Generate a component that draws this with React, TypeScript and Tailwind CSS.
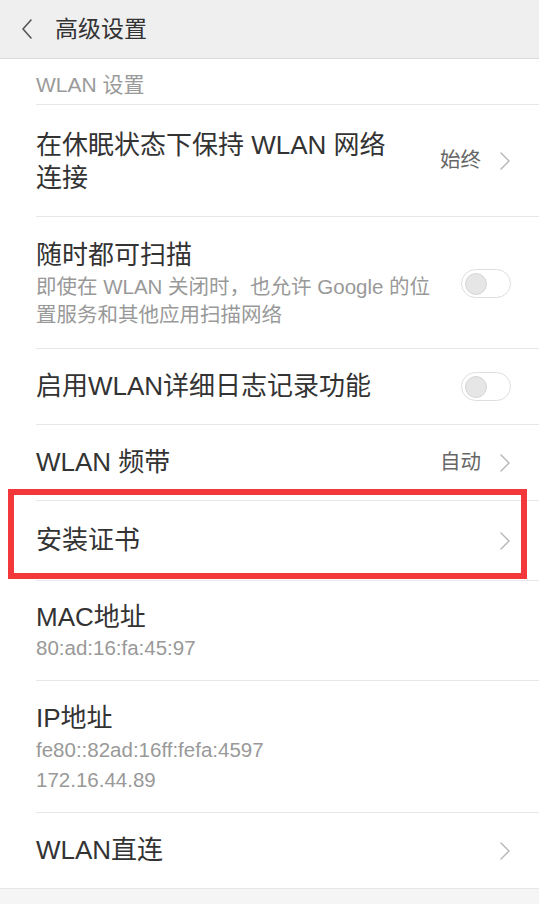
const font = { fontFamily: '"Liberation Sans", "Noto Sans CJK SC", sans-serif' };

const Chevron = () => (
    <svg width="12" height="20" viewBox="0 0 12 20" className="shrink-0">
        <path d="M2 2 L10 10 L2 18" fill="none" stroke="#b5b5b5" strokeWidth="1.4" strokeLinecap="round" strokeLinejoin="round" />
    </svg>
);

const Toggle = () => (
    <div className="w-[50px] h-[29px] rounded-full border border-[#dedede] bg-white flex items-center px-[3px] shrink-0">
        <div className="w-[22px] h-[22px] rounded-full bg-[#e6e6e6] border border-[#d6d6d6]" />
    </div>
);

const Row = ({ h, children }: { h: string; children: React.ReactNode }) => (
    <div className={`ml-[36px] border-t border-[#e8e8e8] pr-[28px] flex items-center ${h}`}>
        {children}
    </div>
);

export default function App() {
    return (
        <div style={font} className="w-[539px] h-[904px] bg-white flex flex-col overflow-hidden">
            <div className="h-[59px] bg-[#efefef] border-b border-[#dadada] flex items-center pl-[20px] shrink-0">
                <svg width="14" height="22" viewBox="0 0 14 22">
                    <path d="M11 2 L3 11 L11 20" fill="none" stroke="#555" strokeWidth="1.6" strokeLinecap="round" strokeLinejoin="round" />
                </svg>
                <span className="ml-[21px] text-[23px] text-[#333]">高级设置</span>
            </div>

            <div className="h-[45px] pl-[36px] pt-[6px] flex items-center text-[21px] text-[#9a9a9a] shrink-0">WLAN 设置</div>

            <Row h="h-[112px]">
                <div className="flex-1 text-[26px] leading-[33px] text-[#333] pt-[2px]">
                    在休眠状态下保持 WLAN 网络<br />连接
                </div>
                <span className="text-[20.5px] text-[#666] mr-[18px]">始终</span>
                <Chevron />
            </Row>

            <Row h="h-[132px]">
                <div className="flex-1 flex flex-col pt-[2px]">
                    <span className="text-[26px] leading-[33px] text-[#333]">随时都可扫描</span>
                    <span className="text-[20.5px] leading-[28px] text-[#999] mt-[1px]">
                        即使在 WLAN 关闭时，也允许 Google 的位<br />置服务和其他应用扫描网络
                    </span>
                </div>
                <div className="self-start mt-[52px]"><Toggle /></div>
            </Row>

            <Row h="h-[76px]">
                <span className="flex-1 text-[26px] text-[#333]">启用WLAN详细日志记录功能</span>
                <Toggle />
            </Row>

            <Row h="h-[76px]">
                <span className="flex-1 text-[26px] text-[#333]">WLAN 频带</span>
                <span className="text-[20.5px] text-[#666] mr-[18px]">自动</span>
                <Chevron />
            </Row>

            <div className="relative shrink-0">
                <Row h="h-[80px]">
                    <span className="flex-1 text-[26px] text-[#333]">安装证书</span>
                    <Chevron />
                </Row>
                <div className="absolute left-[8px] right-[12px] top-[-11px] bottom-[1px] border-[6px] border-[#f2383a]" />
            </div>

            <Row h="h-[100px]">
                <div className="flex flex-col pt-[2px]">
                    <span className="text-[26px] leading-[33px] text-[#333]">MAC地址</span>
                    <span className="text-[20.5px] leading-[28px] text-[#999]">80:ad:16:fa:45:97</span>
                </div>
            </Row>

            <Row h="h-[132px]">
                <div className="flex flex-col pt-[4px]">
                    <span className="text-[26px] leading-[33px] text-[#333]">IP地址</span>
                    <span className="text-[20.5px] leading-[30px] text-[#999]">fe80::82ad:16ff:fefa:4597</span>
                    <span className="text-[20.5px] leading-[30px] text-[#999]">172.16.44.89</span>
                </div>
            </Row>

            <Row h="h-[76px]">
                <span className="flex-1 text-[26px] text-[#333]">WLAN直连</span>
                <Chevron />
            </Row>

            <div className="flex-1 bg-[#f5f5f5] border-t border-[#e8e8e8]" />
        </div>
    );
}
